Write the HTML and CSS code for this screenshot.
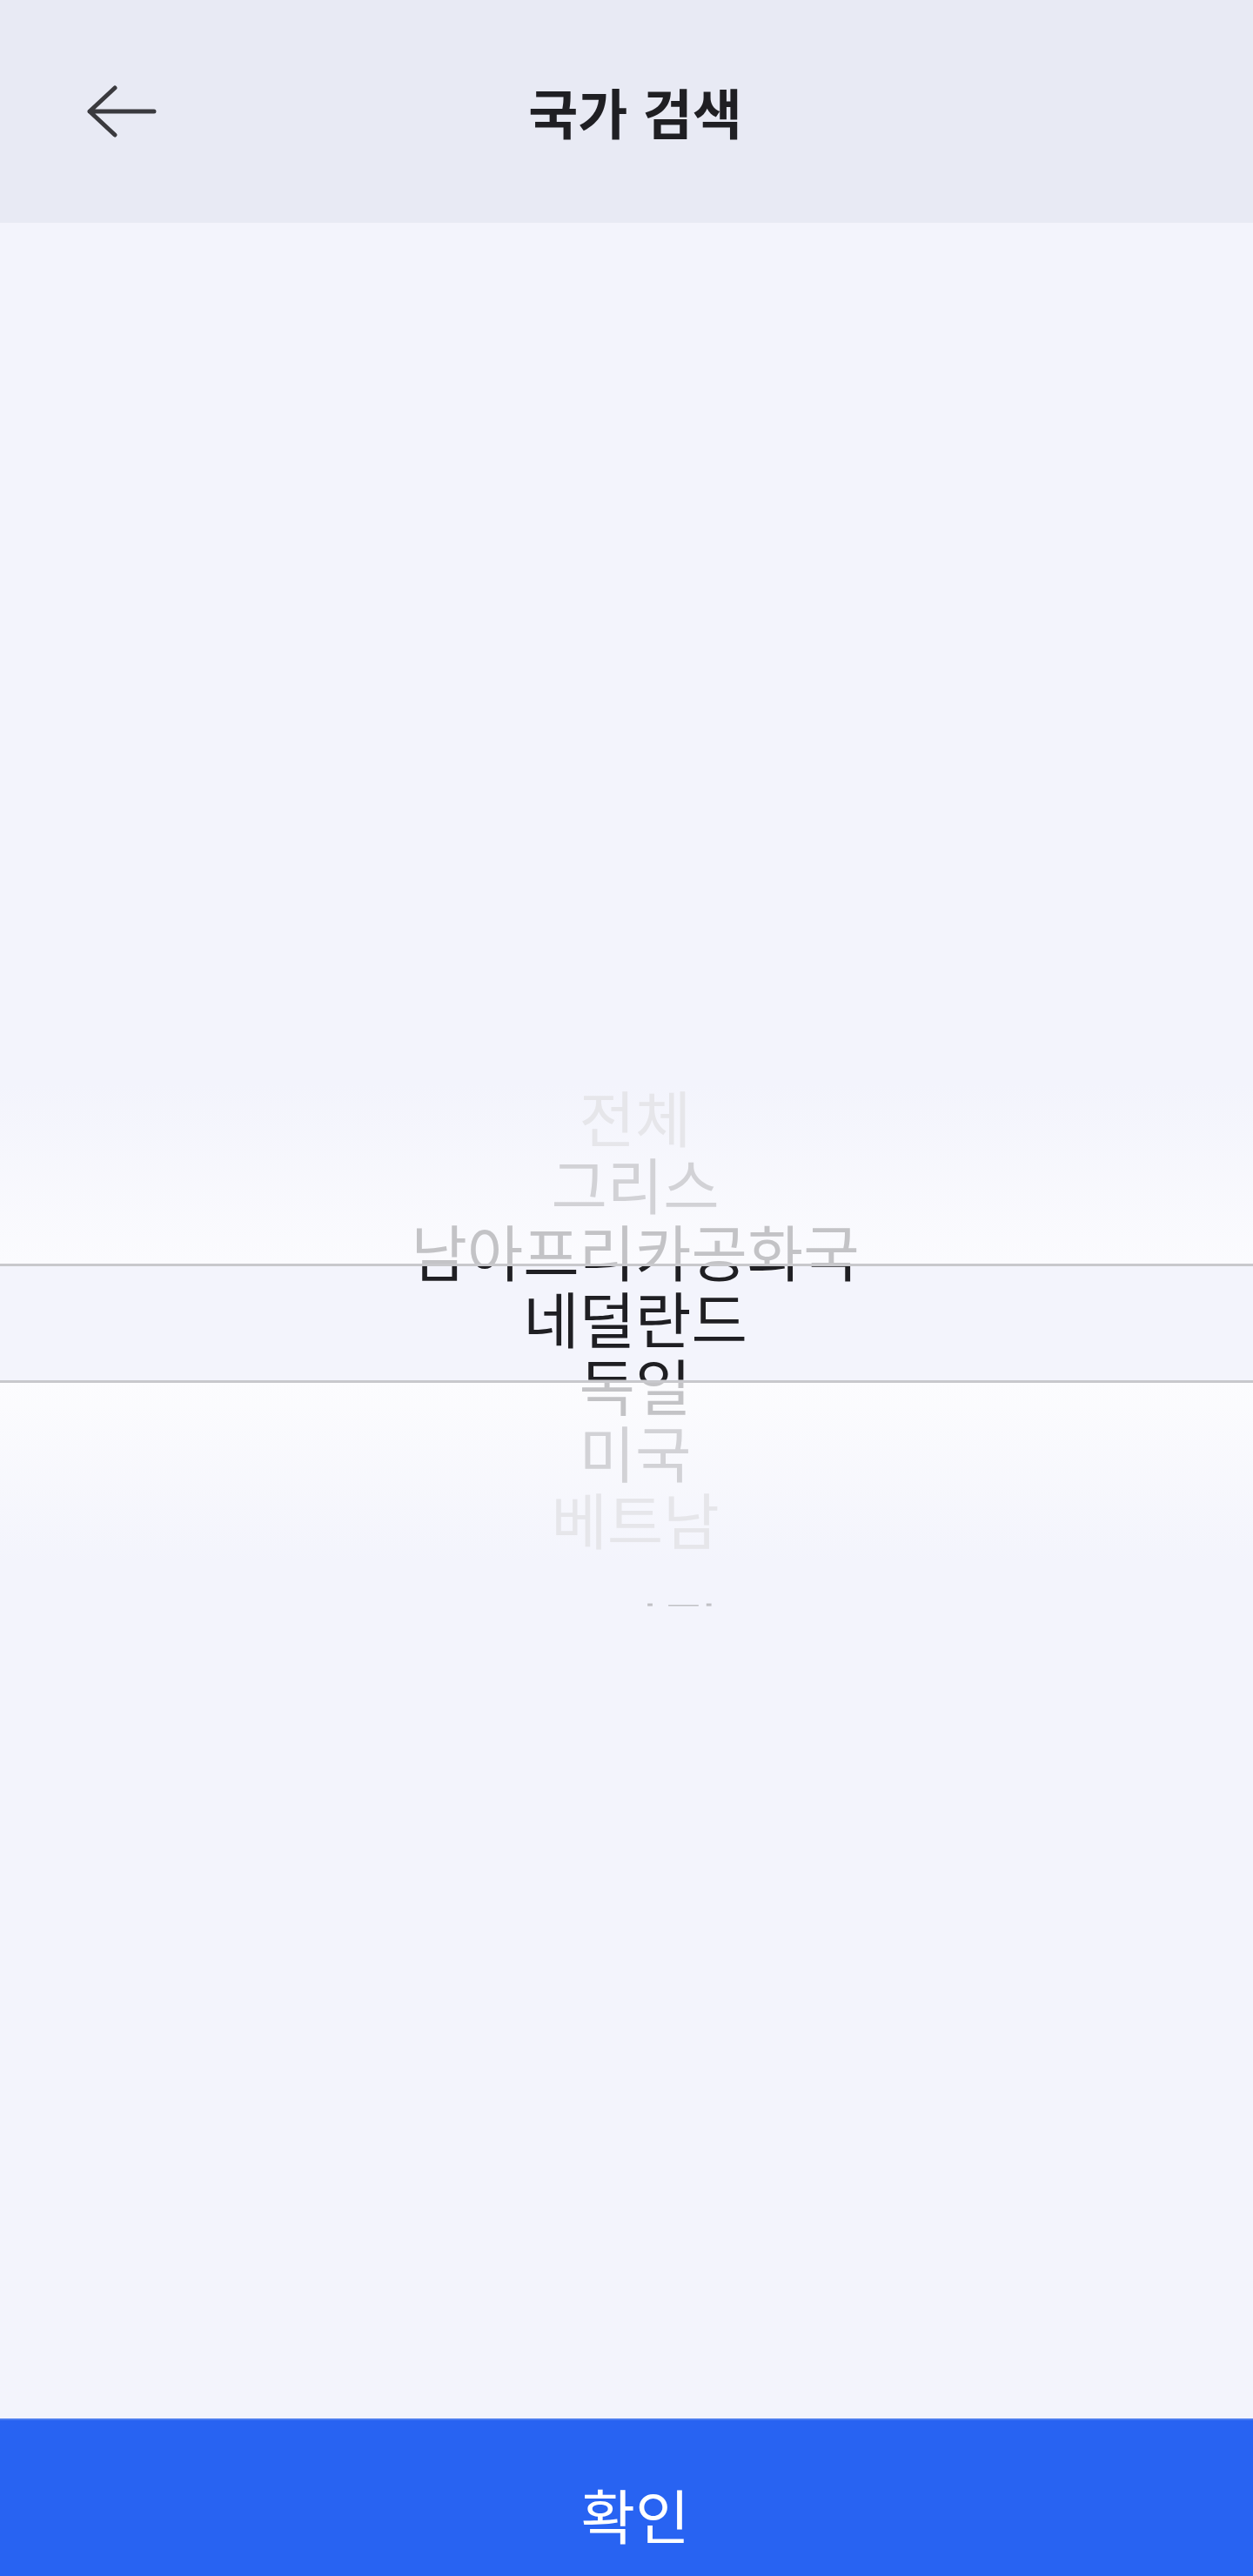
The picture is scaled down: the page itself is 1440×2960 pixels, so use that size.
FILE: index.html
```html
<!DOCTYPE html>
<html lang="ko">
<head>
    <meta charset="UTF-8">
    <meta name="viewport" content="width=device-width, initial-scale=1.0">
    <title>국가 검색</title>
    <link rel="stylesheet" href="styles.css">
</head>
<body>

    <header class="topbar">
        <button class="back" aria-label="뒤로 가기">
            <svg width="80" height="60" viewBox="0 0 80 60">
                <path d="M77 30 H3 M32 3 L3 30 L32 57" fill="none" stroke="#3a3a3e" stroke-width="5" stroke-linecap="round" stroke-linejoin="round"/>
            </svg>
        </button>
        <h1 class="title">국가 검색</h1>
    </header>

    <main class="content">
        <div class="wheel">
            <!-- gray list, outside the selection band -->
            <ul class="items items-dim">
                <li class="d3">전체</li>
                <li class="d2">그리스</li>
                <li class="d1">남아프리카공화국</li>
                <li class="d0">네덜란드</li>
                <li class="d1">독일</li>
                <li class="d2">미국</li>
                <li class="d3">베트남</li>
                <li class="cut">브라질</li>
            </ul>
            <!-- same list in dark, only visible inside the band -->
            <ul class="items items-active" aria-hidden="true">
                <li>전체</li>
                <li>그리스</li>
                <li>남아프리카공화국</li>
                <li>네덜란드</li>
                <li>독일</li>
                <li>미국</li>
                <li>베트남</li>
            </ul>
            <div class="band"></div>
        </div>
    </main>

    <footer class="actions">
        <button class="confirm">확인</button>
    </footer>

</body>
</html>
```

FILE: styles.css
```css
* {
    box-sizing: border-box;
}
body {
    margin: 0;
    height: 2960px;
    display: flex;
    flex-direction: column;
    font-family: "Noto Sans CJK KR", "Noto Sans", sans-serif;
    background-color: #f3f4fc;
    color: #1f1f23;
}
.topbar {
    height: 256px;
    flex-shrink: 0;
    display: grid;
    grid-template-columns: 1fr auto 1fr;
    align-items: center;
    background-color: #e8eaf4;
}
.back {
    justify-self: start;
    margin-left: 100px;
    padding: 0;
    border: none;
    background: none;
    display: flex;
}
.back svg {
    filter: blur(0.6px);
}
.title {
    margin: 0 0 0 20px;
    font-size: 62px;
    font-weight: 700;
    color: #1f1f23;
}
.content {
    flex: 1;
    display: flex;
    align-items: center;
    justify-content: center;
}
.wheel {
    position: relative;
    width: 100%;
    height: 548px;
    background: linear-gradient(to bottom,
        #f3f4fc 0px,
        #fbfbfe 208px,
        #f3f4fc 208px,
        #f3f4fc 345px,
        #fcfcfe 345px,
        #f3f4fc 560px);
}
.items {
    margin: 0;
    padding: 0 0 0 20px;
    list-style: none;
    text-align: center;
}
.items li {
    height: 77px;
    line-height: 77px;
    font-size: 70px;
    white-space: nowrap;
}
.items-dim .d0 { color: #c4c4c8; }
.items-dim .d1 { color: #c3c3c6; }
.items-dim .d2 { color: #d2d2d6; }
.items-dim .d3 { color: #e6e6ea; }
/* next row, only its top edge peeks out */
.items-dim .cut {
    color: #c0c0c4;
    transform: translateY(47px);
    clip-path: inset(13px 618px 61px 680px);
}
.items-active {
    position: absolute;
    top: 0;
    left: 0;
    right: 0;
    clip-path: inset(211px 0 197px 0);
    background-color: #f3f4fc;
}
.items-active li {
    color: #1f1f23;
}
.band {
    position: absolute;
    top: 208px;
    left: 0;
    right: 0;
    height: 137px;
    border-top: 3px solid #c8c8cc;
    border-bottom: 3px solid #c8c8cc;
}
.actions {
    flex-shrink: 0;
    display: flex;
}
.confirm {
    width: 100%;
    height: 181px;
    padding: 35px 0 0 20px;
    border: none;
    border-top: 2px solid #4a7cf0;
    background-color: #2863f2;
    color: white;
    font-family: inherit;
    font-size: 68px;
}
```
